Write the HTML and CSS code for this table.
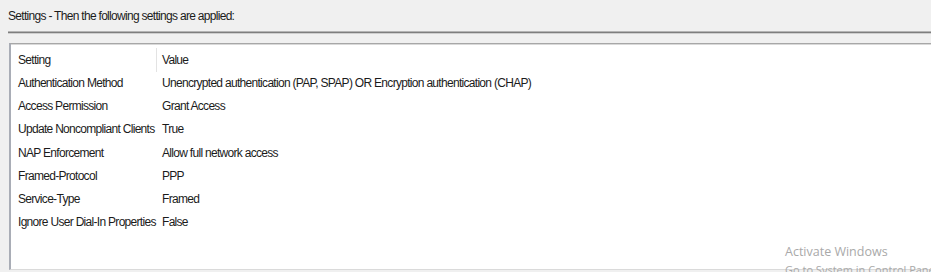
FILE: index.html
```html
<!DOCTYPE html>
<html>
<head>
<meta charset="utf-8">
<link rel="stylesheet" href="styles.css">
</head>
<body>
<div class="page">
  <div class="title">Settings - Then the following settings are applied:</div>
  <div class="rule"></div>
  <div class="listbox">
    <div class="row head">
      <div class="c1">Setting</div>
      <div class="c2">Value</div>
    </div>
    <div class="row"><div class="c1">Authentication Method</div><div class="c2">Unencrypted authentication (PAP, SPAP) OR Encryption authentication (CHAP)</div></div>
    <div class="row"><div class="c1">Access Permission</div><div class="c2">Grant Access</div></div>
    <div class="row"><div class="c1">Update Noncompliant Clients</div><div class="c2">True</div></div>
    <div class="row"><div class="c1">NAP Enforcement</div><div class="c2">Allow full network access</div></div>
    <div class="row"><div class="c1">Framed-Protocol</div><div class="c2">PPP</div></div>
    <div class="row"><div class="c1">Service-Type</div><div class="c2">Framed</div></div>
    <div class="row"><div class="c1">Ignore User Dial-In Properties</div><div class="c2">False</div></div>
  </div>
  <div class="watermark">
    <div class="wm1">Activate Windows</div>
    <div class="wm2">Go to System in Control Panel to activate Windows.</div>
  </div>
</div>
</body>
</html>
```
FILE: styles.css
```css
html, body {
  margin: 0;
  padding: 0;
}
body {
  background: #f0f0f0;
  font-family: "Liberation Sans", Arial, sans-serif;
  font-size: 12px;
  color: #1b1b1b;
  letter-spacing: -0.7px;
}
.page {
  position: relative;
  width: 931px;
  height: 272px;
  overflow: hidden;
}
.title {
  padding: 9px 0 0 8px;
  height: 22px;
  line-height: 14px;
}
.rule {
  margin-left: 8px;
  height: 1px;
  background: #7e7e7e;
  border-top: 1px solid #b4b4b4;
  border-bottom: 1px solid #cfcfcf;
}
.listbox {
  margin: 9px 0 0 9px;
  height: 225px;
  background: #ffffff;
  border-top: 1px solid #a7a7a7;
  border-left: 2px solid #a9adb6;
  border-bottom: 1px solid #dadada;
  box-shadow: inset 0 1px 0 #d9d9d9;
}
.row {
  display: flex;
  height: 23.2px;
  line-height: 23.2px;
  white-space: nowrap;
}
.row.head {
  height: 24px;
  line-height: 24px;
  margin-top: 4px;
}
.c1 {
  width: 138px;
  padding-left: 7px;
}
.c2 {
  padding-left: 6px;
}
.head .c1 {
  border-right: 1px solid #e3e3e3;
}
.head .c2 {
  padding-left: 5px;
}
.watermark {
  position: absolute;
  left: 785px;
  top: 242px;
  color: #a9a9a9;
  letter-spacing: 0;
  white-space: nowrap;
}
.wm1 {
  font-family: "Open Sans", sans-serif;
  font-size: 12.5px;
  line-height: 20px;
}
.wm2 {
  font-family: "Open Sans", sans-serif;
  font-size: 11px;
  line-height: 16px;
}
```
